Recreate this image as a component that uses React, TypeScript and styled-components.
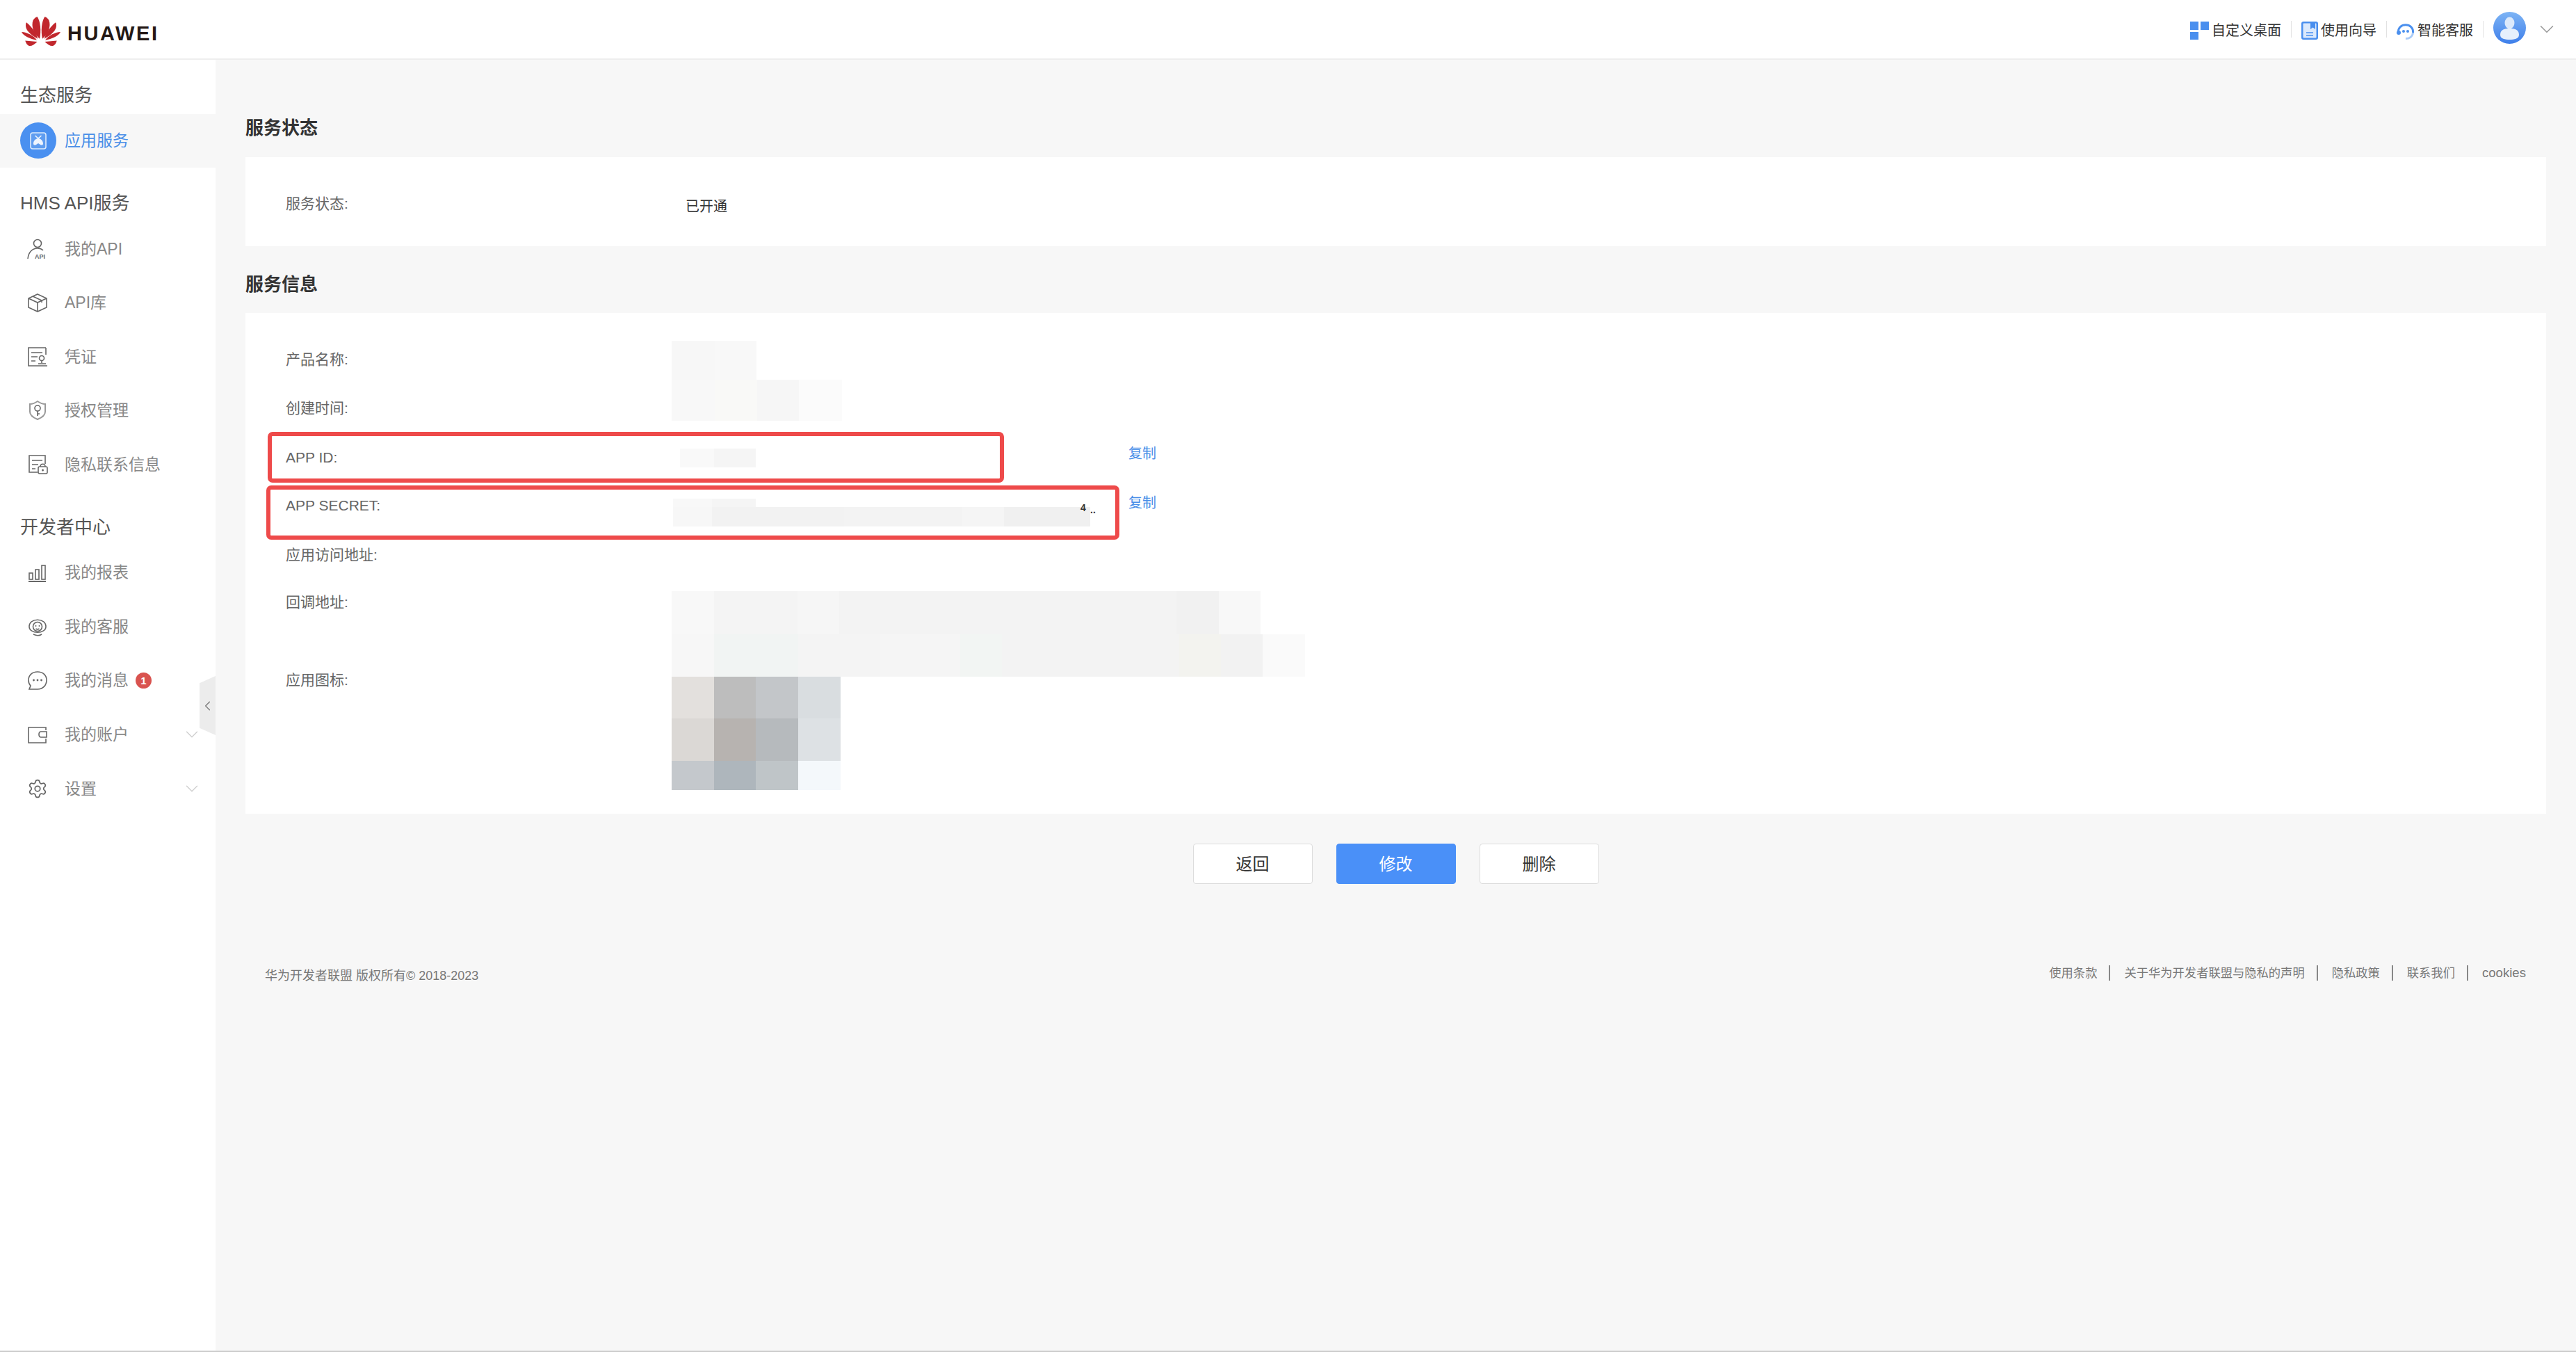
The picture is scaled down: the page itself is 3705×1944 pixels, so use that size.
import React from "react"
import styled, { createGlobalStyle } from "styled-components"
import { ChevronDown, ChevronLeft, Settings } from "lucide-react"

const GlobalStyle = createGlobalStyle`
  html, body {
    margin: 0;
    padding: 0;
    background: #f7f7f7;
    font-family: "Liberation Sans", "Noto Sans CJK SC", sans-serif;
  }
  * { box-sizing: border-box; }
`

const Page = styled.div`
  width: 3705px;
  height: 1944px;
  display: flex;
  flex-direction: column;
  overflow: hidden;
  border-bottom: 2px solid #cccccc;
`

const TopBar = styled.header`
  height: 86px;
  flex: none;
  display: flex;
  align-items: center;
  justify-content: space-between;
  background: #fff;
  border-bottom: 2px solid #eeeeee;
  padding: 6px 25px 0 30px;
`

const Logo = styled.div`
  display: flex;
  align-items: center;
  gap: 9px;
`

const LogoText = styled.span`
  font-size: 29px;
  font-weight: 700;
  letter-spacing: 2.6px;
  color: #231815;
  margin-top: 6px;
`

const TopActions = styled.div`
  display: flex;
  align-items: center;
  margin-top: -6px;
`

const TopAction = styled.div`
  display: flex;
  align-items: center;
  gap: 4px;
  font-size: 20px;
  color: #333;
  padding: 0 14px;
  height: 24px;
  border-right: 1px solid #e2e2e2;
  svg { margin-top: 4px; }
`

const Avatar = styled.div`
  margin: -4px 13px 0 14px;
  display: flex;
`

const Body = styled.div`
  flex: 1;
  display: flex;
  min-height: 0;
`

const Sidebar = styled.nav`
  width: 310px;
  flex: none;
  background: #fff;
  position: relative;
`

const SideTitle = styled.div`
  height: 77.6px;
  padding: 24px 0 0 29px;
  line-height: 55px;
  font-size: 26px;
  color: #555;
`

const SideItem = styled.div<{ $active?: boolean }>`
  height: 77.6px;
  display: flex;
  align-items: center;
  padding-left: ${(p) => (p.$active ? "29px" : "39px")};
  gap: ${(p) => (p.$active ? "12px" : "24px")};
  font-size: 23px;
  color: ${(p) => (p.$active ? "#4a8fe8" : "#888")};
  background: ${(p) => (p.$active ? "#f7f7f7" : "transparent")};
  position: relative;
`

const ItemLabel = styled.span`
  margin-top: -4px;
`

const IconSlot = styled.span`
  width: 30px;
  height: 30px;
  flex: none;
  display: flex;
  color: #666;
`

const ActiveCircle = styled.span`
  width: 52px;
  height: 52px;
  border-radius: 50%;
  background: #4a90f0;
  display: flex;
  align-items: center;
  justify-content: center;
`

const Badge = styled.span`
  width: 23px;
  height: 23px;
  margin-left: -14px;
  border-radius: 50%;
  background: #d9534f;
  color: #fff;
  font-size: 15px;
  font-weight: 700;
  display: flex;
  align-items: center;
  justify-content: center;
`

const Caret = styled.span`
  position: absolute;
  right: 19px;
  top: 24px;
  display: flex;
  color: #cfcfcf;
`

const CollapseTab = styled.div`
  position: absolute;
  right: 0;
  top: 886px;
  width: 23px;
  height: 85px;
  background: #ececec;
  clip-path: polygon(0 12%, 100% 0, 100% 100%, 0 88%);
  display: flex;
  align-items: center;
  justify-content: center;
  color: #777;
`

const Main = styled.main`
  flex: 1;
  min-width: 0;
  padding: 0 43px 0 43px;
`

const SectionTitle = styled.h2<{ $top: number; $bottom: number }>`
  margin: ${(p) => p.$top}px 0 ${(p) => p.$bottom}px;
  font-size: 26px;
  line-height: 36px;
  font-weight: 700;
  color: #333;
`

const Card = styled.section`
  background: #fff;
  position: relative;
`

const StatusCard = styled(Card)`
  height: 128px;
  display: grid;
  grid-template-columns: 575px 1fr;
  padding: 6px 0 0 58px;
  align-items: center;
`

const FormCard = styled(Card)`
  height: 720px;
  padding: 51px 0 0 58px;
`

const FormRow = styled.div<{ $h: number }>`
  height: ${(p) => p.$h}px;
  position: relative;
`

const Label = styled.span`
  font-size: 21px;
  line-height: 32px;
  color: #666;
`

const StatusValue = styled.span`
  font-size: 20px;
  color: #333;
  margin-top: 4px;
`

const Patch = styled.div<{ $x: number; $y: number }>`
  position: absolute;
  left: ${(p) => p.$x}px;
  top: ${(p) => p.$y}px;
  display: flex;
  flex-direction: column;
`

const PatchRow = styled.div`
  display: flex;
`

const PatchCell = styled.span<{ $w: number; $h: number; $c: string }>`
  width: ${(p) => p.$w}px;
  height: ${(p) => p.$h}px;
  background: ${(p) => p.$c};
`

const CopyLink = styled.a<{ $top: number }>`
  position: absolute;
  left: 1270px;
  top: ${(p) => p.$top}px;
  font-size: 20px;
  line-height: 30px;
  color: #4a8fe8;
`

const Callout = styled.div<{ $x: number; $y: number; $w: number; $h: number }>`
  position: absolute;
  left: ${(p) => p.$x}px;
  top: ${(p) => p.$y}px;
  width: ${(p) => p.$w}px;
  height: ${(p) => p.$h}px;
  border: 6px solid #ee4a4a;
  border-radius: 7px;
`

const Truncated = styled.span<{ $x: number; $y: number }>`
  position: absolute;
  left: ${(p) => p.$x}px;
  top: ${(p) => p.$y}px;
  font-size: 14px;
  font-weight: 700;
  line-height: 14px;
  color: #333;
`

const ButtonRow = styled.div`
  display: flex;
  justify-content: center;
  gap: 34px;
  margin-top: 43px;
`

const Button = styled.button<{ $primary?: boolean }>`
  width: 172px;
  height: 58px;
  border-radius: 4px;
  font-family: inherit;
  font-size: 24px;
  padding: 0 0 3px;
  border: 1px solid ${(p) => (p.$primary ? "#4a90f8" : "#dcdcdc")};
  background: ${(p) => (p.$primary ? "#4a90f8" : "#fff")};
  color: ${(p) => (p.$primary ? "#fff" : "#333")};
`

const Footer = styled.footer`
  display: flex;
  justify-content: space-between;
  align-items: center;
  margin-top: 113px;
  padding: 0 29px 0 28px;
`

const Copyright = styled.span`
  font-size: 18px;
  color: #777;
  margin-top: 4px;
`

const FooterLinks = styled.div`
  display: flex;
  align-items: center;
`

const FooterLink = styled.span<{ $latin?: boolean }>`
  font-size: ${(p) => (p.$latin ? "18.6px" : "17.3px")};
  line-height: 22px;
  color: #777;
  padding: 0 17px 0 20px;
  border-right: 2px solid #888;
  &:last-child { border-right: 0; padding-right: 0; }
`

const PETALS = [
  "M26.7 32.7 C18.3 25.3 14 15.3 17.3 6 C19.3 3 21.7 1.3 23.3 1 C27.7 7 29.3 22 26.7 32.7Z",
  "M24 32.7 C13.3 27 6.7 20.3 6.7 13.7 C6.7 12 7 10 7.7 9.3 C15 15.3 21.7 23.7 24 32.7Z",
  "M22.7 34.7 C14 33 4.5 30 0.7 23 C9 23.5 18 28 22.7 34.7Z",
  "M6 35.5 L23.3 37 C19 41 15 43.5 12 43 C9 42.5 7 39 6 35.5Z",
]

function HuaweiMark() {
  return (
    <svg width="58" height="44" viewBox="0 0 57.4 44">
      {PETALS.map((d) => (
        <React.Fragment key={d}>
          <path d={d} fill="#c1272d" />
          <path d={d} fill="#c1272d" transform="translate(57.4 0) scale(-1 1)" />
        </React.Fragment>
      ))}
    </svg>
  )
}

const line = { fill: "none", stroke: "currentColor", strokeWidth: 1.6 }

const icons: Record<string, React.ReactNode> = {
  api: (
    <svg width="30" height="30" viewBox="0 0 30 30">
      <circle cx="15" cy="7" r="5.5" {...line} />
      <path d="M1 29 C2 19 8 14 15 14 C18 14 21 15 23 17" {...line} />
      <text x="11" y="29" fontSize="9" fontWeight="700" fill="currentColor">API</text>
    </svg>
  ),
  box: (
    <svg width="30" height="30" viewBox="0 0 30 30">
      <path d="M15 3 L28 9 V22 L15 28 L2 22 V9 Z M2 9 L15 15 L28 9 M15 15 V28" {...line} />
      <path d="M8 6 L21 12 V15" {...line} />
    </svg>
  ),
  cert: (
    <svg width="30" height="30" viewBox="0 0 30 30">
      <path d="M27 2 H2 V28 H29 M27 2 V12" {...line} />
      <path d="M6 9 H22 M6 15 H15 M6 21 H12" {...line} />
      <circle cx="21" cy="17" r="3.5" {...line} />
      <path d="M21 20 V24 M16 25 H27" {...line} />
    </svg>
  ),
  shield: (
    <svg width="30" height="30" viewBox="0 0 30 30">
      <path d="M4 6 C9 6 12 4 15 2 C18 4 21 6 26 6 V17 C26 23 20 26 15 28 C10 26 4 23 4 17 Z" {...line} strokeWidth={2} stroke="#999" />
      <circle cx="15" cy="12" r="4" {...line} />
      <path d="M15 16 V23 M15 20 H18" {...line} />
    </svg>
  ),
  privacy: (
    <svg width="30" height="30" viewBox="0 0 30 30">
      <path d="M15 26 H3 V2 H26 V14" {...line} />
      <path d="M7 9 H22 M7 15 H16 M7 21 H12" {...line} />
      <rect x="16" y="18" width="13" height="10" rx="2" {...line} />
      <path d="M19 18 C19 13 26 13 26 18" {...line} />
      <circle cx="22.5" cy="23" r="1.5" fill="currentColor" />
    </svg>
  ),
  chart: (
    <svg width="30" height="30" viewBox="0 0 30 30">
      <rect x="3" y="16" width="5" height="9" {...line} />
      <rect x="12" y="11" width="5" height="14" {...line} />
      <rect x="21" y="5" width="5" height="20" {...line} />
      <path d="M2 28 H27" {...line} strokeWidth={2} />
    </svg>
  ),
  service: (
    <svg width="30" height="30" viewBox="0 0 30 30">
      <path d="M3 15 C3 2 27 2 27 15 C27 26 3 26 3 15 Z" {...line} />
      <circle cx="15" cy="15" r="6.5" {...line} />
      <circle cx="12.5" cy="14" r="1" fill="currentColor" />
      <circle cx="17.5" cy="14" r="1" fill="currentColor" />
      <path d="M12.5 18 C14 19 16 19 17.5 18 M9 26 C13 28 18 28 21 26" {...line} />
    </svg>
  ),
  chat: (
    <svg width="30" height="30" viewBox="0 0 30 30">
      <path d="M15 3 C7 3 2 8 2 15 C2 18 3 21 5 23 L3 28 H15 C23 28 28 22 28 15 C28 8 23 3 15 3 Z" {...line} />
      <circle cx="9.5" cy="15" r="1.4" fill="currentColor" />
      <circle cx="15" cy="15" r="1.4" fill="currentColor" />
      <circle cx="20.5" cy="15" r="1.4" fill="currentColor" />
    </svg>
  ),
  wallet: (
    <svg width="30" height="30" viewBox="0 0 30 30">
      <path d="M27 9 V5 H2 V27 H27 V21" {...line} />
      <path d="M28 11 H20 C16 11 16 19 20 19 H28 Z" {...line} />
    </svg>
  ),
}

function SideIcon({ name }: { name: string }) {
  if (name === "gear") {
    return (
      <IconSlot>
        <Settings size={30} strokeWidth={1.4} />
      </IconSlot>
    )
  }
  return <IconSlot>{icons[name]}</IconSlot>
}

function PatchBlock({ x, y, rows }: { x: number; y: number; rows: { h: number; cells: [number, string][] }[] }) {
  return (
    <Patch $x={x} $y={y}>
      {rows.map((r, i) => (
        <PatchRow key={i}>
          {r.cells.map(([w, c], j) => (
            <PatchCell key={j} $w={w} $h={r.h} $c={c} />
          ))}
        </PatchRow>
      ))}
    </Patch>
  )
}

const VALUE_X = 555

export default function App() {
  return (
    <Page>
      <GlobalStyle />
      <TopBar>
        <Logo>
          <HuaweiMark />
          <LogoText>HUAWEI</LogoText>
        </Logo>
        <TopActions>
          <TopAction>
            <svg width="27" height="26" viewBox="0 0 27 26">
              <rect x="0" y="0" width="12" height="12" fill="#4a8fee" />
              <rect x="15" y="0" width="12" height="12" fill="#4a8fee" />
              <rect x="0" y="15" width="12" height="12" fill="#4a8fee" />
            </svg>
            自定义桌面
          </TopAction>
          <TopAction>
            <svg width="24" height="26" viewBox="0 0 24 26">
              <path d="M3 0 H21 Q24 0 24 3 V23 Q24 26 21 26 H3 Q0 26 0 23 V3 Q0 0 3 0 Z" fill="#4a8fee" />
              <rect x="2.5" y="2.5" width="19" height="21" rx="1" fill="#dbe9fc" />
              <path d="M13 0 H20 V11 L16.5 8.5 L13 11 Z" fill="#4a8fee" />
              <path d="M7 16 H17 M7 20 H17" stroke="#4a8fee" strokeWidth="1.6" />
            </svg>
            使用向导
          </TopAction>
          <TopAction>
            <svg width="26" height="25" viewBox="0 0 26 25">
              <path d="M2.5 15 C1 0 25 0 23.5 15" fill="none" stroke="#4a8fee" strokeWidth="3" />
              <path d="M23.5 15 C23 21 18 23.5 13 23.5" fill="none" stroke="#a9cbf8" strokeWidth="3" />
              <circle cx="3" cy="15" r="3" fill="#4a8fee" />
              <circle cx="10" cy="13" r="2" fill="#4a8fee" />
              <circle cx="16" cy="13" r="2" fill="#4a8fee" />
            </svg>
            智能客服
          </TopAction>
          <Avatar>
            <svg width="47" height="46" viewBox="0 0 47 46">
              <defs>
                <linearGradient id="avatarBg" x1="0" y1="0" x2="0" y2="1">
                  <stop offset="0" stopColor="#7db4f5" />
                  <stop offset="1" stopColor="#3f7fea" />
                </linearGradient>
              </defs>
              <ellipse cx="23.5" cy="23" rx="23.5" ry="23" fill="url(#avatarBg)" />
              <ellipse cx="23.5" cy="16" rx="7" ry="8.5" fill="#dbe9fb" />
              <path d="M10 33 C10 25 17 24 23.5 24 C30 24 37 25 37 33 C37 39 30 40 23.5 40 C17 40 10 39 10 33 Z" fill="#e6f0fc" />
            </svg>
          </Avatar>
          <ChevronDown size={34} strokeWidth={1.1} color="#999" />
        </TopActions>
      </TopBar>
      <Body>
        <Sidebar>
          <SideTitle>生态服务</SideTitle>
          <SideItem $active>
            <ActiveCircle>
              <svg width="24" height="25" viewBox="0 0 24 25">
                <rect x="1" y="1" width="22" height="23" rx="3" fill="#5f9df0" stroke="#dceafc" strokeWidth="1.6" />
                <path d="M7.5 5 L12 9 L16.5 5" fill="none" stroke="#eef5fe" strokeWidth="1.6" />
                <path d="M12 9 C16 9 19 13 19 16.5 C19 19 16 19 15 18 L12 16 L9 18 C8 19 5 19 5 16.5 C5 13 8 9 12 9 Z" fill="#eef5fe" />
              </svg>
            </ActiveCircle>
            <ItemLabel>应用服务</ItemLabel>
          </SideItem>
          <SideTitle>HMS API服务</SideTitle>
          <SideItem><SideIcon name="api" /><ItemLabel>我的API</ItemLabel></SideItem>
          <SideItem><SideIcon name="box" /><ItemLabel>API库</ItemLabel></SideItem>
          <SideItem><SideIcon name="cert" /><ItemLabel>凭证</ItemLabel></SideItem>
          <SideItem><SideIcon name="shield" /><ItemLabel>授权管理</ItemLabel></SideItem>
          <SideItem><SideIcon name="privacy" /><ItemLabel>隐私联系信息</ItemLabel></SideItem>
          <SideTitle>开发者中心</SideTitle>
          <SideItem><SideIcon name="chart" /><ItemLabel>我的报表</ItemLabel></SideItem>
          <SideItem><SideIcon name="service" /><ItemLabel>我的客服</ItemLabel></SideItem>
          <SideItem><SideIcon name="chat" /><ItemLabel>我的消息</ItemLabel><Badge>1</Badge></SideItem>
          <SideItem>
            <SideIcon name="wallet" /><ItemLabel>我的账户</ItemLabel>
            <Caret><ChevronDown size={30} strokeWidth={1.1} /></Caret>
          </SideItem>
          <SideItem>
            <SideIcon name="gear" /><ItemLabel>设置</ItemLabel>
            <Caret><ChevronDown size={30} strokeWidth={1.1} /></Caret>
          </SideItem>
          <CollapseTab><ChevronLeft size={30} strokeWidth={1.3} /></CollapseTab>
        </Sidebar>
        <Main>
          <SectionTitle $top={80} $bottom={24}>服务状态</SectionTitle>
          <StatusCard>
            <Label>服务状态:</Label>
            <StatusValue>已开通</StatusValue>
          </StatusCard>
          <SectionTitle $top={37} $bottom={23}>服务信息</SectionTitle>
          <FormCard>
            <FormRow $h={70}>
              <Label>产品名称:</Label>
              <PatchBlock x={VALUE_X} y={-11} rows={[
                { h: 56, cells: [[62, "#f7f7f7"], [60, "#f8f8f8"]] },
                { h: 59, cells: [[62, "#f8f8f8"], [61, "#f9f9f7"], [60, "#f6f6f6"], [62, "#fbfbfb"]] },
              ]} />
            </FormRow>
            <FormRow $h={71}>
              <Label>创建时间:</Label>
            </FormRow>
            <FormRow $h={69}>
              <Label>APP ID:</Label>
              <PatchBlock x={VALUE_X + 12} y={3} rows={[
                { h: 27, cells: [[49, "#f9f9f9"], [60, "#f5f5f5"]] },
              ]} />
            </FormRow>
            <FormRow $h={71}>
              <Label>APP SECRET:</Label>
              <PatchBlock x={VALUE_X + 2} y={6} rows={[
                { h: 12, cells: [[56, "#f8f8f8"], [63, "#f5f5f5"]] },
                { h: 28, cells: [[56, "#f7f7f7"], [190, "#f2f2f2"], [170, "#f3f3f3"], [60, "#f5f5f5"], [124, "#f0f0f0"]] },
              ]} />
              <Truncated $x={1143} $y={12}>4</Truncated>
              <Truncated $x={1157} $y={15}>..</Truncated>
            </FormRow>
            <FormRow $h={68}>
              <Label>应用访问地址:</Label>
            </FormRow>
            <FormRow $h={112}>
              <Label>回调地址:</Label>
              <PatchBlock x={VALUE_X} y={0} rows={[
                { h: 62, cells: [[61, "#f8f8f8"], [120, "#f4f4f4"], [60, "#f6f6f6"], [485, "#f3f3f3"], [61, "#f1f1f1"], [60, "#f8f8f8"]] },
                { h: 61, cells: [[61, "#f7f7f7"], [121, "#f1f4f3"], [118, "#f4f4f4"], [115, "#f5f5f5"], [60, "#f2f5f3"], [255, "#f3f3f3"], [60, "#f3f3ef"], [60, "#f2f2f2"], [61, "#fafafa"]] },
              ]} />
            </FormRow>
            <FormRow $h={174}>
              <Label>应用图标:</Label>
              <PatchBlock x={VALUE_X} y={11} rows={[
                { h: 60, cells: [[61, "#e3e0dd"], [60, "#bdbdbd"], [61, "#c3c6c9"], [61, "#d9dde0"]] },
                { h: 61, cells: [[61, "#dbd8d5"], [60, "#b7b3b0"], [61, "#b6babd"], [61, "#dde1e4"]] },
                { h: 42, cells: [[61, "#c4c8cc"], [60, "#aeb6bc"], [61, "#bfc5c8"], [61, "#f4f8fb"]] },
              ]} />
            </FormRow>
            <CopyLink $top={187}>复制</CopyLink>
            <CopyLink $top={258}>复制</CopyLink>
            <Callout $x={32} $y={171} $w={1059} $h={73} />
            <Callout $x={30} $y={248} $w={1227} $h={78} />
          </FormCard>
          <ButtonRow>
            <Button>返回</Button>
            <Button $primary>修改</Button>
            <Button>删除</Button>
          </ButtonRow>
          <Footer>
            <Copyright>华为开发者联盟 版权所有© 2018-2023</Copyright>
            <FooterLinks>
              <FooterLink>使用条款</FooterLink>
              <FooterLink>关于华为开发者联盟与隐私的声明</FooterLink>
              <FooterLink>隐私政策</FooterLink>
              <FooterLink>联系我们</FooterLink>
              <FooterLink $latin>cookies</FooterLink>
            </FooterLinks>
          </Footer>
        </Main>
      </Body>
    </Page>
  )
}
